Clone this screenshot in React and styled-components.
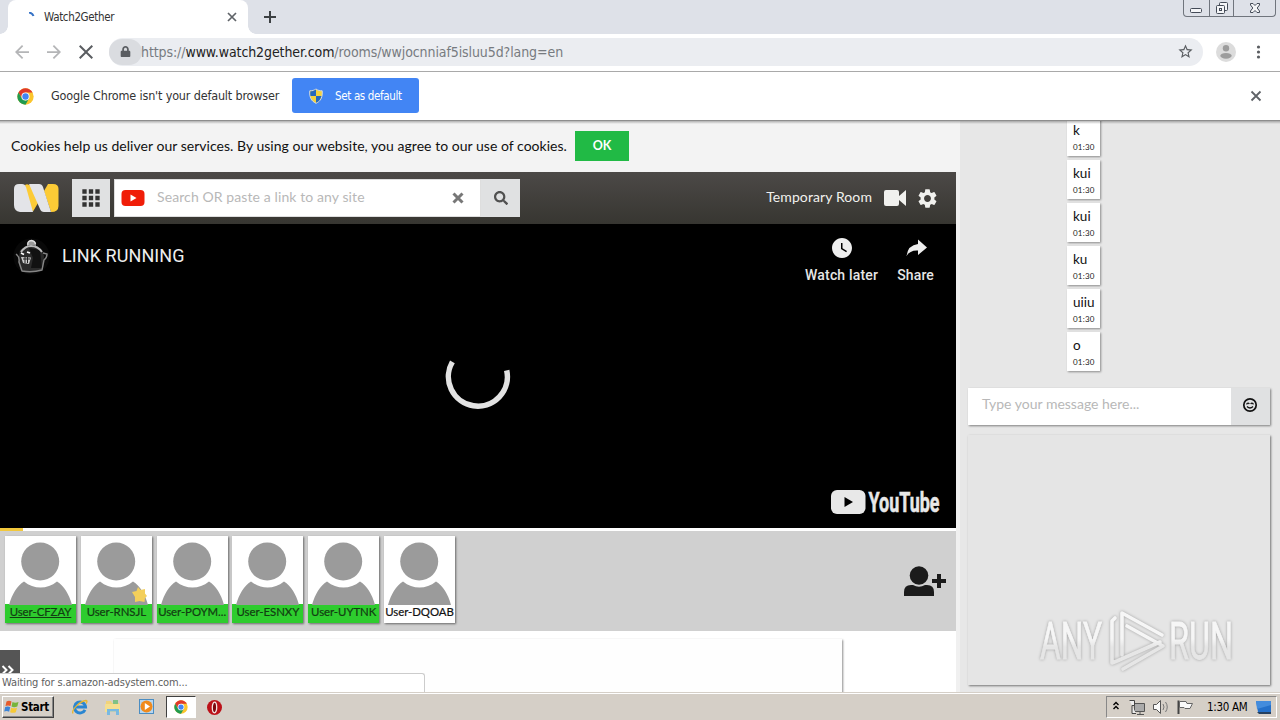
import React from 'react'
import styled, { createGlobalStyle } from 'styled-components'
import { MdArrowBack, MdArrowForward, MdClose, MdStarBorder, MdSettings, MdWatchLater, MdApps } from 'react-icons/md'
import { FaLock, FaSearch } from 'react-icons/fa'

const SYSTEM = "'DejaVu Sans Condensed', 'DejaVu Sans', Verdana, sans-serif"
const LATO = "Lato, 'Open Sans', sans-serif"
const ROBOTO = "Roboto, 'Liberation Sans', sans-serif"

const MESSAGES = ['k', 'kui', 'kui', 'ku', 'uiiu', 'o']

const USERS = [
  { name: 'User-CFZAY', active: true, self: true },
  { name: 'User-RNSJL', active: true, star: true },
  { name: 'User-POYM...', active: true },
  { name: 'User-ESNXY', active: true },
  { name: 'User-UYTNK', active: true },
  { name: 'User-DQOAB' },
]

const GlobalStyle = createGlobalStyle`
  * { box-sizing: border-box; }
  body { margin: 0; background: white; }
  svg { display: block; flex: none; }
`

const Screen = styled.div`
  width: 1280px;
  height: 720px;
  overflow: hidden;
  display: flex;
  flex-direction: column;
  font-family: ${SYSTEM};
  font-size: 12px;
`

const Label = styled.span`
  white-space: nowrap;
  font-family: ${props => props.$font || SYSTEM};
  font-size: ${props => props.$size || 12}px;
  font-weight: ${props => props.$weight || 400};
  letter-spacing: ${props => props.$track || 0}px;
  color: ${props => props.$color || '#333'};
  line-height: 18px;
`

/* Browser frame */

const TabStrip = styled.div`
  flex: none;
  height: 34px;
  background: #dee1e8;
  display: flex;
  align-items: flex-start;
  padding-left: 8px;
`

const Tab = styled.div`
  position: relative;
  width: 240px;
  height: 34px;
  padding: 0 11px 0 21px;
  display: flex;
  align-items: center;
  background: white;
  border-radius: 8px 8px 0 0;

  &::before,
  &::after {
    content: '';
    position: absolute;
    bottom: 0;
    width: 8px;
    height: 8px;
  }
  &::before {
    left: -8px;
    background: radial-gradient(circle at 0 0, #dee1e8 7.5px, white 8px);
  }
  &::after {
    right: -8px;
    background: radial-gradient(circle at 100% 0, #dee1e8 7.5px, white 8px);
  }
`

const TabTitle = styled(Label)`
  flex: 1;
  margin-left: 9px;
`

const NewTab = styled.div`
  margin: 11px auto 0 16px;
`

const WindowButtons = styled.div`
  display: flex;
  width: 93px;
  height: 17px;
  margin-right: 4px;
  border: 1px solid #70757d;
  border-top: 0;
  border-radius: 0 0 4px 4px;
`

const WindowButton = styled.div`
  width: ${props => props.$width}px;
  display: flex;
  justify-content: center;
  border-right: ${props => (props.$last ? 0 : '1px solid #70757d')};
`

const Toolbar = styled.div`
  flex: none;
  height: 38px;
  background: white;
  border-bottom: 1px solid #a9a9a9;
  display: flex;
  align-items: center;
  padding: 0 15px 2px;
  color: #5a5d61;
`

const NavIcons = styled.div`
  width: 94px;
  display: flex;
  gap: 18px;
`

const Omnibox = styled.div`
  flex: 1;
  height: 28px;
  display: flex;
  align-items: center;
  background: #ebedf1;
  border-radius: 14px;
  padding-right: 9px;
`

const Security = styled.div`
  width: 33px;
  height: 26px;
  margin-right: -1px;
  border-radius: 14px;
  background: #dadce0;
  display: flex;
  align-items: center;
  justify-content: center;
`

const Url = styled(Label)`
  flex: 1;
  b {
    font-weight: 400;
    color: #222;
  }
`

const Profile = styled.div`
  margin: 0 16px 0 13px;
`

const InfoBar = styled.div`
  flex: none;
  height: 49px;
  border-bottom: 1px solid #8d8d8d;
  background: white;
  display: flex;
  align-items: center;
  padding: 0 18px 0 17px;
`

const InfoText = styled(Label)`
  width: 228px;
  margin-left: 17px;
`

const DefaultButton = styled.div`
  width: 127px;
  height: 35px;
  margin: -1px auto 0 13px;
  padding-left: 16px;
  border-radius: 3px;
  background: #4285f4;
  display: flex;
  align-items: center;
  gap: 11px;
`

/* Page */

const Page = styled.div`
  position: relative;
  flex: none;
  height: 571px;
  display: flex;
  background: #f0f0f0;

  &::before {
    content: '';
    position: absolute;
    z-index: 2;
    top: 0;
    left: 0;
    width: 100%;
    height: 3px;
    background: linear-gradient(rgba(0, 0, 0, 0.28), rgba(0, 0, 0, 0));
  }
`

const Main = styled.div`
  width: 956px;
  display: flex;
  flex-direction: column;

  > * {
    flex: none;
  }
`

const CookieBar = styled.div`
  width: 960px;
  height: 51px;
  background: #f3f3f3;
  display: flex;
  align-items: flex-start;
  padding: 10px 0 0 11px;
`

const CookieText = styled(Label)`
  width: 564px;
  line-height: 29px;
`

const OkButton = styled.div`
  width: 54px;
  height: 30px;
  background: #21ba45;
  display: flex;
  align-items: center;
  justify-content: center;
`

const RoomHeader = styled.div`
  height: 52px;
  background: linear-gradient(#4c4947, #373631);
  display: flex;
  align-items: center;
  padding: 0 17px 0 13px;
`

const GridButton = styled.div`
  width: 38px;
  height: 38px;
  margin: 0 4px 0 13px;
  background: #e0e1e2;
  display: flex;
  align-items: center;
  justify-content: center;
`

const SearchBox = styled.div`
  width: 367px;
  height: 38px;
  background: white;
  border: 1px solid #dedede;
  display: flex;
  align-items: center;
  padding: 0 16px 0 6px;
`

const SearchText = styled(Label)`
  flex: 1;
  margin: -3px 0 0 12px;
`

const SearchButton = styled.div`
  width: 39px;
  height: 38px;
  margin-right: auto;
  background: #e0e1e2;
  color: #505050;
  display: flex;
  align-items: center;
  justify-content: center;
`

const RoomActions = styled.div`
  display: flex;
  align-items: center;
  color: #f1f1ee;
`

const RoomName = styled(Label)`
  margin-top: -3px;
`

const Video = styled.div`
  height: 304px;
  background: black;
  display: flex;
  flex-direction: column;
  justify-content: space-between;
`

const VideoTop = styled.div`
  height: 64px;
  display: flex;
  align-items: center;
  padding: 0 22px 0 13px;
`

const VideoTitle = styled(Label)`
  flex: 1;
  margin-left: 12px;
`

const VideoAction = styled.div`
  height: 48px;
  margin: 8px 0 0 19px;
  color: #eee;
  display: flex;
  flex-direction: column;
  align-items: center;
  justify-content: space-between;
`

const Spinner = styled.div`
  display: flex;
  justify-content: center;
`

const VideoBottom = styled.div`
  display: flex;
  justify-content: flex-end;
  padding: 0 14px 12px 0;
`

const Progress = styled.div`
  height: 3px;
  background: white;
`

const Elapsed = styled.div`
  width: 23px;
  height: 3px;
  background: #f2c83c;
`

const UserStrip = styled.div`
  height: 100px;
  background: #d0d0d0;
  display: flex;
  gap: 4.8px;
  padding: 5px 9px 0 5px;
`

const UserCard = styled.div`
  position: relative;
  width: 71px;
  height: 87px;
  background: white;
  box-shadow: 1px 1px 2px rgba(0, 0, 0, 0.5);
`

const UserName = styled.div`
  height: 19px;
  margin-top: -1px;
  background: ${props => (props.$active ? '#2ecc2e' : 'white')};
  color: ${props => (props.$active ? '#123c12' : '#111')};
  text-decoration: ${props => (props.$self ? 'underline' : 'none')};
  font: 11.4px/16px ${LATO};
  -webkit-text-stroke: 0.2px;
  letter-spacing: -0.05px;
  text-align: center;
  white-space: nowrap;
`

const Badge = styled.div`
  position: absolute;
  top: 50px;
  left: 50px;
`

const AddUser = styled.div`
  margin: 29px 0 0 auto;
`

const Lower = styled.div`
  position: relative;
  height: 61px;
  overflow: hidden;
  background: white;
  padding: 8px 114px 0;
`

const AdPanel = styled.div`
  width: 728px;
  height: 60px;
  background: #fefefe;
  box-shadow: 1px 1px 2px rgba(0, 0, 0, 0.45);
`

const Expand = styled.div`
  position: absolute;
  left: 0;
  top: 19px;
  width: 20px;
  height: 30px;
  background: #555;
  padding: 15px 0 0 1px;
`

const StatusBubble = styled.div`
  position: absolute;
  left: 0;
  bottom: 0;
  width: 425px;
  height: 19px;
  background: white;
  border: 1px solid #ccc;
  border-left: 0;
  border-bottom: 0;
  border-radius: 0 3px 0 0;
  padding-left: 2px;
  display: flex;
`

const Chat = styled.div`
  width: 320px;
  margin-left: 4px;
  background: #e7e7e7;
  display: flex;
  flex-direction: column;
`

const Messages = styled.div`
  height: 267px;
  overflow: hidden;
  padding-left: 107px;
  display: flex;
  flex-direction: column;
  justify-content: flex-end;
  gap: 4px;
  padding-bottom: 17px;
`

const Message = styled.div`
  flex: none;
  width: 33px;
  height: 39px;
  padding: 3px 0 0 6px;
  background: white;
  box-shadow: 1px 1px 2px rgba(0, 0, 0, 0.4);
  font: 13.5px/20px ${LATO};
  color: #111;
`

const Time = styled.div`
  font: 8px/15px ${LATO};
  letter-spacing: 0.2px;
  color: #222;
`

const Compose = styled.div`
  width: 302px;
  height: 37px;
  margin: 0 0 10px 8px;
  background: white;
  box-shadow: 1px 1px 2px rgba(0, 0, 0, 0.45);
  display: flex;
  justify-content: space-between;
  padding: 7px 0 0 14px;
`

const Emoji = styled.div`
  width: 39px;
  height: 37px;
  margin-top: -7px;
  background: #e0e1e2;
  display: flex;
  align-items: center;
  justify-content: center;
  padding: 0 2px 4px 0;
`

const CamPanel = styled.div`
  width: 302px;
  height: 250px;
  margin-left: 8px;
  background: #e5e5e5;
  box-shadow: 1px 1px 2px rgba(0, 0, 0, 0.5);
  display: flex;
  justify-content: flex-end;
  align-items: flex-end;
  padding: 0 32px 12px 0;
`

/* Taskbar */

const Taskbar = styled.div`
  flex: none;
  height: 28px;
  background: #d5cfc7;
  border-top: 1px solid #d5cfc7;
  box-shadow: inset 0 1px white;
  display: flex;
  align-items: center;
  padding: 3px 3px 2px 2px;
`

const StartButton = styled.div`
  width: 52px;
  height: 22px;
  border: 1px solid;
  border-color: white #404040 #404040 white;
  box-shadow: inset -1px -1px #888;
  display: flex;
  align-items: center;
  gap: 1px;
  padding-left: 1px;
`

const Pinned = styled.div`
  width: 30px;
  height: 22px;
  margin-left: ${props => props.$gap || 0}px;
  display: flex;
  align-items: center;
  justify-content: center;
  background: ${props => (props.$open ? 'white' : 'transparent')};
  border: ${props => (props.$open ? '1px solid' : 0)};
  border-color: #404040 white white #404040;
`

const Tray = styled.div`
  width: 171px;
  height: 22px;
  margin-left: auto;
  border: 1px solid;
  border-color: #888 white white #888;
  display: flex;
  align-items: center;
  padding: 0 1px 0 5px;
`

const Clock = styled(Label)`
  width: 47px;
  margin-left: 9px;
`

const ChromeLogo = ({ size }) => (
  <svg width={size} height={size} viewBox="0 0 48 48">
    <circle cx="24" cy="24" r="23" fill="#fbc52d" />
    <path d="M4.1 12.5A23 23 0 0 1 43.9 12.5H24L14 29.5Z" fill="#e0392b" />
    <path d="M4.1 12.5A23 23 0 0 0 24 47L34 29.7L24 35L14 29.7Z" fill="#209b50" />
    <circle cx="24" cy="24" r="11.5" fill="white" />
    <circle cx="24" cy="24" r="9" fill="#4285f4" />
  </svg>
)

const Shield = () => (
  <svg width="16" height="16" viewBox="0 0 16 16">
    <path d="M8 1C6 2.5 4 2.8 1.8 2.8C1.3 9 3 13 8 15.3C13 13 14.7 9 14.2 2.8C12 2.8 10 2.5 8 1Z" fill="#f4d23e" stroke="#cfd9e6" />
    <path d="M8 1.6C6 3 4 3.3 2.4 3.3Q2 6 2.5 8H8Z" fill="#2668bd" />
    <path d="M8 8H13.4C12.5 11.5 11 13.5 8 14.8Z" fill="#2668bd" />
  </svg>
)

const Avatar = () => (
  <svg width="71" height="69" viewBox="0 0 71 69">
    <circle cx="35.2" cy="25.5" r="19" fill="#9b9b9b" />
    <path d="M4 69C7 58 12 50 19 45.5C29 53.5 42 53.5 52 45.5C59 50 64 58 67 69Z" fill="#9b9b9b" />
  </svg>
)

const RoomLogo = () => (
  <svg width="46" height="30" viewBox="0 0 46 30">
    <path d="M12 2Q15 0 19 4L25 20L20 28.5Q17 26 16 21Z" fill="#fccb36" />
    <path d="M35 1H40Q45.5 1 45.5 6V23Q45.5 29 38 29L31 8Z" fill="#fccb36" />
    <path d="M6 1H9Q12 1 13 4L20 29H7Q1 28 1 22V6Q1 1 6 1Z" fill="#e3e4e8" />
    <path d="M16 1H26Q29 1 30 4L38 29H31Q28 29 27 26Z" fill="#e3e4e8" />
  </svg>
)

const ChannelIcon = () => (
  <svg width="37" height="37" viewBox="0 0 37 37">
    <circle cx="18.5" cy="18.5" r="18" fill="#080808" />
    <path d="M7 12L14 8H23L29 12L31 18L30 31Q22 35 8 33L5 24Z" fill="#2a2a2a" />
    <path d="M16 10L27 12L29 30H18L20 20Z" fill="#111" />
    <path d="M14 8Q13 3 18.5 2.5Q24 3 23 8Q18 6 14 8Z" fill="#999" />
    <path d="M15 7Q14 3 18.5 2.5Q22 3 22.5 6" fill="none" stroke="#ddd" strokeWidth="1.3" />
    <path d="M8 14Q12 8 18 8Q25 8 29 14" fill="none" stroke="#bbb" strokeWidth="1.8" />
    <path d="M3 16Q7 19 6 24L9 33Q19 35 29 32L31 22Q34 20 34 16L30 15" fill="none" stroke="#858585" strokeWidth="1.4" />
    <path d="M8 15L11 16.5M14 14L17 15" stroke="white" strokeWidth="1.8" fill="none" />
    <path d="M8 19L18 19.5L16 26L10 25Z" fill="#ccc" />
    <path d="M10 21H17M12 19V25M14.5 19V25" stroke="#222" />
  </svg>
)

const YouTubeLogo = () => (
  <svg width="112" height="28" viewBox="0 0 112 28">
    <rect x="1" y="2" width="34.5" height="24" rx="6" fill="#e8e8e8" />
    <path d="M14.5 9L23 14L14.5 19Z" fill="black" />
    <text x="38.5" y="24" fontFamily="Roboto, sans-serif" fontWeight="700" fontSize="28" fill="#e8e8e8" stroke="#e8e8e8" strokeWidth="0.6" textLength="71" lengthAdjust="spacingAndGlyphs">YouTube</text>
  </svg>
)

const AddUserIcon = () => (
  <svg width="44" height="32" viewBox="0 0 44 32">
    <circle cx="16" cy="10.5" r="9.3" fill="#1b1b1b" />
    <path d="M1 31V27Q1 20 8 20H10Q16 23.5 22 20H24Q31 20 31 27V31Z" fill="#1b1b1b" />
    <path d="M36 9V23M29 16H43" stroke="#1b1b1b" strokeWidth="4" />
  </svg>
)

const Glow = styled.svg`
  filter: drop-shadow(0 0 1.5px rgba(0, 0, 0, 0.3));
`

const Watermark = () => (
  <Glow width="200" height="64" viewBox="0 0 200 64">
    <defs>
      <linearGradient id="fade" gradientUnits="userSpaceOnUse" x1="0" y1="5" x2="0" y2="60">
        <stop offset="0.45" stopColor="#f6f6f6" />
        <stop offset="0.6" stopColor="#e6e6e6" />
      </linearGradient>
    </defs>
    <g fill="url(#fade)" stroke="url(#fade)" strokeWidth="0.8" fontFamily="Roboto, sans-serif" fontSize="52" fontWeight="400">
      <text x="2" y="50" textLength="62" lengthAdjust="spacingAndGlyphs">ANY</text>
      <text x="131" y="50" textLength="64" lengthAdjust="spacingAndGlyphs">RUN</text>
    </g>
    <g fill="none" stroke="url(#fade)" strokeWidth="3.6" strokeLinejoin="round" strokeLinecap="round">
      <path d="M77 9L74 12V54L79 52L122 33" />
      <path d="M84 46V4L124 26" />
      <path d="M85 60L125 37L89 17" />
    </g>
  </Glow>
)

const WindowsLogo = () => (
  <svg width="16" height="16" viewBox="0 0 16 16">
    <path d="M2.5 2.5Q5 1 7.5 2.5L6.5 7Q4 6 1.5 7Z" fill="#e65b2b" />
    <path d="M8.5 3Q11 4.5 14.5 3L13.3 7.5Q10 8.8 7.5 7.5Z" fill="#77b43b" />
    <path d="M1.2 8Q4 7 6.2 8.2L5.1 12.8Q3 11.5 .2 12.5Z" fill="#3c84d7" />
    <path d="M7.2 8.7Q10 10 13 8.7L11.8 13.2Q9 14.5 6.1 13.2Z" fill="#f6c936" />
  </svg>
)

const IeIcon = () => (
  <svg width="18" height="18" viewBox="0 0 18 18">
    <path d="M14 11.8A5.5 5.5 0 1 1 14.5 9H5" fill="none" stroke="#2a86d1" strokeWidth="3" />
    <path d="M2 15.5C0 12 9 3 15 2.5Q17 3 15 5.5" fill="none" stroke="#e8b62e" strokeWidth="1.3" />
  </svg>
)

const FolderIcon = () => (
  <svg width="18" height="18" viewBox="0 0 18 18">
    <path d="M2 3H7L8 5H15V14H2Z" fill="#f1d37a" />
    <path d="M9 2H14V7H9Z" fill="#80c184" />
    <path d="M1 6H16V14H1Z" fill="#f5df90" />
    <path d="M3 17V11H15V17H12V13.5H6V17Z" fill="#79b9e1" />
  </svg>
)

const PlayerIcon = () => (
  <svg width="18" height="18" viewBox="0 0 18 18">
    <rect x="1.5" y="1.5" width="14" height="14" fill="#b7d6ef" stroke="#4b8dc2" />
    <circle cx="8.5" cy="8.5" r="6" fill="#f08a1c" />
    <path d="M6.8 5V12L12 8.5Z" fill="white" />
  </svg>
)

const OperaIcon = () => (
  <svg width="17" height="17" viewBox="0 0 17 17">
    <circle cx="8.5" cy="8.5" r="7.5" fill="#bc1119" />
    <ellipse cx="8.5" cy="8.5" rx="2.2" ry="5.3" fill="#7c080e" stroke="#f4e4e4" strokeWidth="1.3" />
  </svg>
)

const TrayIcons = () => (
  <svg width="86" height="20" viewBox="0 0 86 20">
    <path d="M1.5 8L4 5.5L6.5 8M1.5 12L4 9.5L6.5 12" fill="none" stroke="black" strokeWidth="1.4" />
    <path d="M22.5 6.5H32.5V14.5H22.5ZM25 17.5H32M28 15V17" fill="#aaa" stroke="#555" />
    <path d="M17.5 3.5H22.5V8.5H20V16.5H24" fill="#eee" stroke="#444" />
    <path d="M41.5 7.5H44.5L48.5 3.5V16.5L44.5 12.5H41.5Z" fill="#fafafa" stroke="#555" />
    <path d="M51 7Q53 10 51 13M53.5 5Q57 10 53.5 15" fill="none" stroke="#777" />
    <path d="M66.5 17V3.5" stroke="#444" strokeWidth="2" />
    <path d="M67.5 4.5H74L75 6.5H80.5L78 11.5H73L72 10.5H67.5Z" fill="#fafafa" stroke="#666" />
  </svg>
)

const BrowserFrame = () => (
  <>
    <TabStrip>
      <Tab>
        <svg width="6" height="10" viewBox="0 0 6 10">
          <path d="M0 0.5Q3.5 1 4.5 4" fill="none" stroke="#3572c6" strokeWidth="2" />
        </svg>
        <TabTitle $size={11.5} $track={-0.35}>Watch2Gether</TabTitle>
        <svg width="10" height="10" viewBox="0 0 10 10">
          <path d="M1 1L9 9M9 1L1 9" stroke="#5f6368" strokeWidth="1.7" />
        </svg>
      </Tab>
      <NewTab>
        <svg width="12" height="12" viewBox="0 0 12 12">
          <path d="M6 0V12M0 6H12" stroke="#3c4043" strokeWidth="2" />
        </svg>
      </NewTab>
      <WindowButtons>
        <WindowButton $width={26}>
          <svg width="14" height="16" viewBox="0 0 14 16">
            <rect x="1.5" y="8.5" width="11" height="4" rx="1" fill="#f4f5f7" stroke="#444b57" />
          </svg>
        </WindowButton>
        <WindowButton $width={25}>
          <svg width="14" height="16" viewBox="0 0 14 16">
            <rect x="4.5" y="2.5" width="8" height="8" rx="1" fill="#f4f5f7" stroke="#444b57" />
            <rect x="1.5" y="5.5" width="8" height="8" rx="1" fill="#f4f5f7" stroke="#444b57" />
            <rect x="4.5" y="8.5" width="2" height="2" fill="none" stroke="#444b57" />
          </svg>
        </WindowButton>
        <WindowButton $width={41} $last>
          <svg width="14" height="16" viewBox="0 0 14 16">
            <path d="M2.5 3.5H5L7 5.5L9 3.5H11.5V5L9.2 8L11.5 11V12.5H9L7 10.5L5 12.5H2.5V11L4.8 8L2.5 5Z" fill="#f4f5f7" stroke="#444b57" />
          </svg>
        </WindowButton>
      </WindowButtons>
    </TabStrip>
    <Toolbar>
      <NavIcons>
        <MdArrowBack size={14} color="#b4b5b7" viewBox="4 4 16 16" />
        <MdArrowForward size={14} color="#b4b5b7" viewBox="4 4 16 16" />
        <MdClose size={14} viewBox="5 5 14 14" />
      </NavIcons>
      <Omnibox>
        <Security>
          <FaLock size={11} />
        </Security>
        <Url $size={14} $track={-0.09} $color="#777b80">
          https://<b>www.watch2gether.com</b>/rooms/wwjocnniaf5isluu5d?lang=en
        </Url>
        <MdStarBorder size={17} />
      </Omnibox>
      <Profile>
        <svg width="20" height="20" viewBox="0 0 20 20">
          <circle cx="10" cy="10" r="10" fill="#dcdcdc" />
          <circle cx="10" cy="6.3" r="3.2" fill="#9c9c9c" />
          <ellipse cx="10" cy="13.8" rx="5.7" ry="2.9" fill="#9c9c9c" />
        </svg>
      </Profile>
      <svg width="13" height="14" viewBox="0 0 13 14">
        <g fill="#5a5d61">
          <circle cx="6.5" cy="2" r="1.6" />
          <circle cx="6.5" cy="7" r="1.6" />
          <circle cx="6.5" cy="12" r="1.6" />
        </g>
      </svg>
    </Toolbar>
    <InfoBar>
      <ChromeLogo size={17} />
      <InfoText $size={12.5} $track={-0.17}>Google Chrome isn't your default browser</InfoText>
      <DefaultButton>
        <Shield />
        <Label $size={11.5} $color="white" $track={-0.35}>Set as default</Label>
      </DefaultButton>
      <svg width="12" height="12" viewBox="0 0 12 12">
        <path d="M1.5 1.5L10.5 10.5M10.5 1.5L1.5 10.5" stroke="#5f6368" strokeWidth="1.8" />
      </svg>
    </InfoBar>
  </>
)

const Room = () => (
  <Main>
    <CookieBar>
      <CookieText $font={LATO} $size={14} $color="#111" $track={0.03}>
        Cookies help us deliver our services. By using our website, you agree to our use of cookies.
      </CookieText>
      <OkButton>
        <Label $font={LATO} $size={12.5} $weight={700} $color="white">OK</Label>
      </OkButton>
    </CookieBar>
    <RoomHeader>
      <RoomLogo />
      <GridButton>
        <MdApps size={26} color="#333" />
      </GridButton>
      <SearchBox>
        <svg width="24" height="18" viewBox="0 0 24 18">
          <rect x="0.5" y="1" width="23" height="16" rx="4" fill="#f01d08" />
          <path d="M9.5 5.5V12.5L15.5 9Z" fill="white" />
        </svg>
        <SearchText $font={LATO} $size={14} $color="#b8b8b8" $track={0.1}>Search OR paste a link to any site</SearchText>
        <svg width="12" height="12" viewBox="0 0 12 12">
          <path d="M1.5 1.5L10.5 10.5M10.5 1.5L1.5 10.5" stroke="#777" strokeWidth="3" />
        </svg>
      </SearchBox>
      <SearchButton>
        <FaSearch size={14} />
      </SearchButton>
      <RoomActions>
        <RoomName $font={LATO} $size={14} $color="#f1f1ee" $track={0.1}>Temporary Room</RoomName>
        <svg width="44" height="18" viewBox="0 0 44 18">
          <path d="M12 3Q12 1 14 1H25Q27 1 27 3V7L34 1V17L27 11V15Q27 17 25 17H14Q12 17 12 15Z" fill="#f1f1ee" />
        </svg>
        <MdSettings size={23} />
      </RoomActions>
    </RoomHeader>
    <Video>
      <VideoTop>
        <ChannelIcon />
        <VideoTitle $font={ROBOTO} $size={18} $color="#eee" $track={0.08}>LINK RUNNING</VideoTitle>
        <VideoAction>
          <MdWatchLater size={24} />
          <Label $font={ROBOTO} $size={14} $weight={500} $color="#e6e6e6" $track={0.18}>Watch later</Label>
        </VideoAction>
        <VideoAction>
          <svg width="24" height="24" viewBox="0 0 24 24">
            <path d="M14 3.5L23 11.5L14 19V14.5Q6 14 2.5 20Q4 9 14 8Z" fill="#eee" />
          </svg>
          <Label $font={ROBOTO} $size={14} $weight={500} $color="#e6e6e6" $track={0.15}>Share</Label>
        </VideoAction>
      </VideoTop>
      <Spinner>
        <svg width="66" height="62" viewBox="0 0 66 62">
          <path d="M7.4 4.8A29.5 29.5 0 1 0 61.7 13.3" fill="none" stroke="#e3e3e3" strokeWidth="5.5" />
        </svg>
      </Spinner>
      <VideoBottom>
        <YouTubeLogo />
      </VideoBottom>
    </Video>
    <Progress>
      <Elapsed />
    </Progress>
    <UserStrip>
      {USERS.map(user => (
        <UserCard key={user.name}>
          <Avatar />
          <UserName $active={user.active} $self={user.self}>{user.name}</UserName>
          {user.star && (
            <Badge>
              <svg width="17" height="17" viewBox="0 0 17 17">
                <path d="M7 1L9.5 4L14 3L14 7.5L16 10L14 12L13.5 16L8.5 15L4 16L4 11L1 6L5.5 5Z" fill="#f3cf5b" />
              </svg>
            </Badge>
          )}
        </UserCard>
      ))}
      <AddUser>
        <AddUserIcon />
      </AddUser>
    </UserStrip>
    <Lower>
      <AdPanel />
      <Expand>
        <svg width="14" height="10" viewBox="0 0 14 10">
          <path d="M1.5 1L5.5 5L1.5 9M7.5 1L11.5 5L7.5 9" fill="none" stroke="white" strokeWidth="2" />
        </svg>
      </Expand>
      <StatusBubble>
        <Label $size={11} $color="#606060" $track={-0.12}>Waiting for s.amazon-adsystem.com...</Label>
      </StatusBubble>
    </Lower>
  </Main>
)

const ChatColumn = () => (
  <Chat>
    <Messages>
      {MESSAGES.map((text, i) => (
        <Message key={i}>
          {text}
          <Time>01:30</Time>
        </Message>
      ))}
    </Messages>
    <Compose>
      <Label $font={LATO} $size={14} $color="#b8b8b8">Type your message here...</Label>
      <Emoji>
        <svg width="16" height="16" viewBox="0 0 16 16">
          <circle cx="8" cy="8" r="6.2" fill="none" stroke="#111" strokeWidth="1.7" />
          <path d="M4.5 7.3Q6 5 7.3 7M8.7 7Q10 5 11.5 7.3M5 9.5Q8 12.5 11 9.5" fill="none" stroke="#111" strokeWidth="1.3" />
        </svg>
      </Emoji>
    </Compose>
    <CamPanel>
      <Watermark />
    </CamPanel>
  </Chat>
)

const DesktopBar = () => (
  <Taskbar>
    <StartButton>
      <WindowsLogo />
      <Label $size={11.5} $weight={700} $color="black" $track={-0.3}>Start</Label>
    </StartButton>
    <Pinned $gap={11}><IeIcon /></Pinned>
    <Pinned $gap={3}><FolderIcon /></Pinned>
    <Pinned $gap={4}><PlayerIcon /></Pinned>
    <Pinned $gap={4} $open><ChromeLogo size={14} /></Pinned>
    <Pinned $gap={3}><OperaIcon /></Pinned>
    <Tray>
      <TrayIcons />
      <Clock $size={11.5} $color="black" $track={-0.3}>1:30 AM</Clock>
      <svg width="18" height="16" viewBox="0 0 18 16">
        <path d="M2 2H17V13H4Z" fill="#2470ca" />
        <path d="M2 2H17V6L3 10Z" fill="#438cdd" />
        <path d="M3 13H17V15H5Z" fill="#26405f" />
      </svg>
    </Tray>
  </Taskbar>
)

const App = () => (
  <Screen>
    <GlobalStyle />
    <BrowserFrame />
    <Page>
      <Room />
      <ChatColumn />
    </Page>
    <DesktopBar />
  </Screen>
)

export default App
